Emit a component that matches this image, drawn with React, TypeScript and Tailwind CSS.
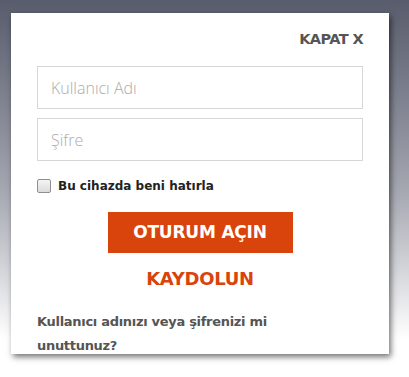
export default function App() {
  return (
    <div className="w-[409px] h-[377px] overflow-hidden bg-gradient-to-b from-[#585c6c] via-[#a4a6b0] via-50% to-[#ffffff] to-90% pt-[13px] pl-[11px]">
      <div
        className="w-[378px] h-[341px] bg-white px-[26px] pt-[18px] shadow-[2px_3px_6px_rgba(0,0,0,0.55)]"
        style={{ fontFamily: "'DejaVu Sans', 'Liberation Sans', sans-serif" }}
      >
        {/* close */}
        <div className="flex justify-end">
          <a href="#" className="text-[14.5px] font-bold text-[#555] tracking-[-0.6px] leading-[16px]">
            KAPAT X
          </a>
        </div>

        {/* fields */}
        <div className="mt-[19px] flex flex-col gap-[9px]">
          <input
            placeholder="Kullanıcı Adı"
            className="h-[43px] w-full border border-[#d6d6d6] px-[13px] text-[16px] text-[#444] placeholder:text-[#acacac] outline-none"
            style={{ fontFamily: "'Open Sans', sans-serif", fontWeight: 300 }}
          />
          <input
            placeholder="Şifre"
            type="password"
            className="h-[43px] w-full border border-[#d6d6d6] px-[13px] text-[16px] text-[#444] placeholder:text-[#acacac] outline-none"
            style={{ fontFamily: "'Open Sans', sans-serif", fontWeight: 300 }}
          />
        </div>

        {/* remember */}
        <label className="mt-[17px] flex items-center gap-[7px]">
          <span className="w-[14px] h-[14px] border border-[#8f8f8f] bg-gradient-to-b from-[#f4f4f4] to-[#dcdcdc] rounded-[2px]" />
          <span className="text-[12px] font-bold text-[#222] leading-[16px]">Bu cihazda beni hatırla</span>
        </label>

        {/* submit */}
        <div className="mt-[18px] flex justify-center">
          <button className="w-[185px] h-[41px] bg-[#d8440b] text-white text-[17px] font-bold tracking-[-0.2px]">
            OTURUM AÇIN
          </button>
        </div>

        <div className="mt-[15px] flex justify-center">
          <a href="#" className="text-[18px] font-bold text-[#d8440b] leading-[22px] tracking-[-0.3px]">
            KAYDOLUN
          </a>
        </div>

        <p className="mt-[20px] text-[13px] font-bold text-[#555] leading-[24px] w-[260px] tracking-[-0.3px]">
          Kullanıcı adınızı veya şifrenizi mi unuttunuz?
        </p>
      </div>
    </div>
  );
}
